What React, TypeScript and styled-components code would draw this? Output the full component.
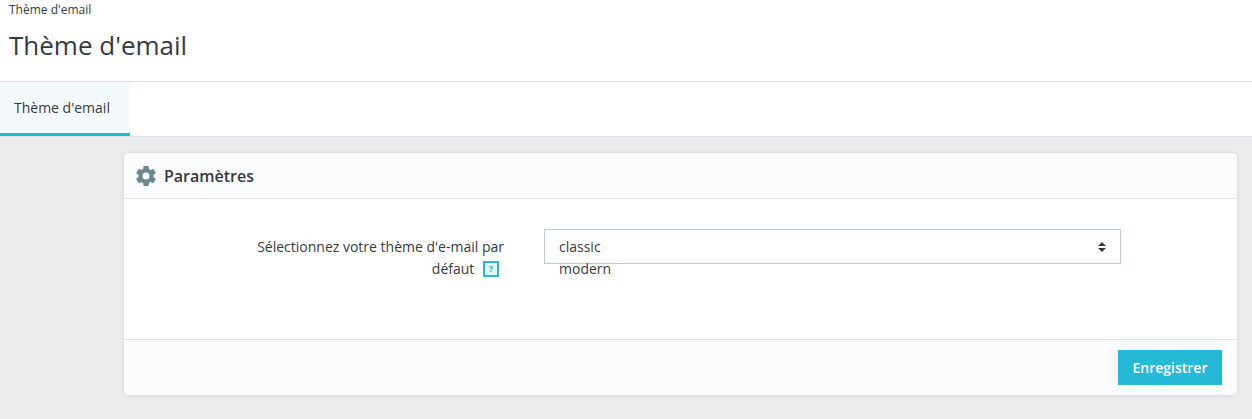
import React from "react";
import styled, { createGlobalStyle } from "styled-components";

const Global = createGlobalStyle`
  html, body { margin: 0; padding: 0; background: #fff; }
  body { font-family: "Open Sans", "Liberation Sans", sans-serif; color: #363a41; }
  * { box-sizing: border-box; }
`;

const Page = styled.div`
  width: 1252px;
  height: 419px;
  display: flex;
  flex-direction: column;
  overflow: hidden;
  background: #e9ebec;
`;

const Header = styled.header`
  flex: 0 0 82px;
  background: #fff;
  border-bottom: 1px solid #dfe3e5;
  padding: 2px 0 0 9px;
`;

const Breadcrumb = styled.div`
  font-size: 12px;
  line-height: 16px;
  color: #363a41;
`;

const Title = styled.h1`
  margin: 9px 0 0;
  font-size: 26px;
  line-height: 36px;
  font-weight: 400;
  color: #363a41;
`;

const TabBar = styled.nav`
  flex: 0 0 55px;
  background: #fff;
  border-bottom: 1px solid #dfe3e5;
  display: flex;
`;

const Tab = styled.div`
  width: 130px;
  height: 54px;
  background: #f4f9fb;
  border-bottom: 3px solid #25b9d7;
  padding: 16px 0 0 14px;
  font-size: 14px;
  line-height: 19px;
  color: #363a41;
`;

const Content = styled.main`
  flex: 1;
  padding: 16px 15px 24px 124px;
`;

const Panel = styled.section`
  height: 242px;
  background: #fff;
  border-radius: 5px;
  box-shadow: 0 0 4px rgba(0, 0, 0, 0.1);
  display: flex;
  flex-direction: column;
  overflow: hidden;
`;

const PanelHead = styled.div`
  flex: 0 0 46px;
  background: #fafbfc;
  border-bottom: 1px solid #dbe6e9;
  display: flex;
  align-items: center;
  gap: 6px;
  padding-left: 10px;
`;

const PanelTitle = styled.h2`
  margin: 0;
  font-size: 16px;
  font-weight: 600;
  color: #363a41;
`;

const Body = styled.div`
  flex: 1;
  display: flex;
  align-items: flex-start;
  padding-top: 30px;
`;

const Label = styled.label`
  width: 380px;
  font-size: 14px;
  line-height: 22px;
  text-align: right;
  color: #363a41;
  padding: 7px 0 0 100px;
`;

const Help = styled.span`
  display: inline-block;
  width: 16px;
  height: 16px;
  margin-left: 5px;
  margin-right: 5px;
  border: 2px solid #25b9d7;
  background: #e4f6f9;
  color: #4fc3dc;
  font-size: 9px;
  font-weight: 800;
  line-height: 12px;
  text-align: center;
  vertical-align: 2px;
`;

const SelectBox = styled.div`
  position: relative;
  margin-left: 40px;
  width: 577px;
  height: 35px;
  border: 1px solid #bbcdd2;
  background: #fff;
  padding: 6px 0 0 14px;
  font-size: 14px;
  line-height: 22px;
  color: #363a41;
`;

const Arrows = styled.svg`
  position: absolute;
  right: 13px;
  top: 12px;
`;

const PanelFoot = styled.div`
  flex: 0 0 56px;
  background: #fafbfc;
  border-top: 1px solid #dbe6e9;
  display: flex;
  justify-content: flex-end;
  align-items: flex-start;
  padding: 10px 15px 0 0;
`;

const SaveButton = styled.button`
  width: 104px;
  height: 35px;
  border: 0;
  background: #25b9d7;
  color: #fff;
  font-family: inherit;
  font-size: 14px;
  font-weight: 600;
  padding: 0;
`;

const Gear = () => (
  <svg width="24" height="24" viewBox="0 0 24 24" fill="#6c868e" aria-hidden="true">
    <path d="M19.43 12.98c.04-.32.07-.64.07-.98s-.03-.66-.07-.98l2.11-1.65c.19-.15.24-.42.12-.64l-2-3.46c-.12-.22-.39-.3-.61-.22l-2.49 1c-.52-.4-1.08-.73-1.69-.98l-.38-2.65A.49.49 0 0 0 14 2h-4c-.25 0-.46.18-.49.42l-.38 2.65c-.61.25-1.17.59-1.69.98l-2.49-1c-.23-.09-.49 0-.61.22l-2 3.46c-.13.22-.07.49.12.64l2.11 1.65c-.04.32-.07.65-.07.98s.03.66.07.98l-2.11 1.65c-.19.15-.24.42-.12.64l2 3.46c.12.22.39.3.61.22l2.49-1c.52.4 1.08.73 1.69.98l.38 2.65c.03.24.24.42.49.42h4c.25 0 .46-.18.49-.42l.38-2.65c.61-.25 1.17-.59 1.69-.98l2.49 1c.23.09.49 0 .61-.22l2-3.46c.12-.22.07-.49-.12-.64l-2.11-1.65zM12 15.5A3.5 3.5 0 1 1 12 8.5a3.5 3.5 0 0 1 0 7z" />
  </svg>
);

export default function App() {
  return (
    <Page>
      <Global />
      <Header>
        <Breadcrumb>Thème d'email</Breadcrumb>
        <Title>Thème d'email</Title>
      </Header>
      <TabBar>
        <Tab>Thème d'email</Tab>
      </TabBar>
      <Content>
        <Panel>
          <PanelHead>
            <Gear />
            <PanelTitle>Paramètres</PanelTitle>
          </PanelHead>
          <Body>
            <Label>
              Sélectionnez votre thème d'e-mail par défaut <Help>?</Help>
            </Label>
            <SelectBox>
              <div>classic</div>
              <div>modern</div>
              <Arrows width="10" height="10" viewBox="0 0 10 10" aria-hidden="true">
                <path d="M5 0 9 4H1zM5 10 1 6h8z" fill="#363a41" />
              </Arrows>
            </SelectBox>
          </Body>
          <PanelFoot>
            <SaveButton>Enregistrer</SaveButton>
          </PanelFoot>
        </Panel>
      </Content>
    </Page>
  );
}
